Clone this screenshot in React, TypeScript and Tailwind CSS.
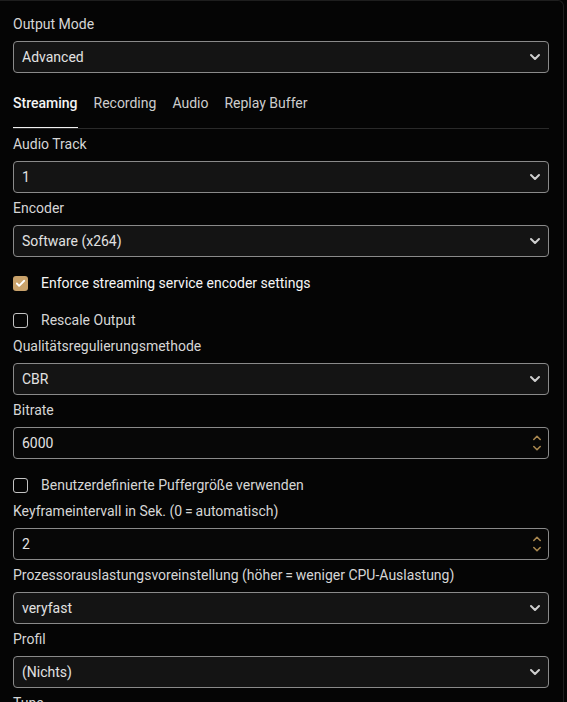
import { ChevronDown, Check } from "lucide-react";

const FONT = "font-['Roboto','Liberation_Sans',sans-serif]";

function Label({ children, className = "" }: { children: React.ReactNode; className?: string }) {
  return <div className={`h-[20px] text-[14px] leading-[20px] text-[#d6d6d6] ${className}`}>{children}</div>;
}

function Select({ value }: { value: string }) {
  return (
    <div className="mt-[7px] flex h-[32px] items-center justify-between rounded-[4px] border border-[#8a8a8a] bg-[#141414] pl-[8px] pr-[5px]">
      <span className="text-[14px] text-[#e2e2e2]">{value}</span>
      <ChevronDown size={16} strokeWidth={3} className="text-[#cfcfcf]" />
    </div>
  );
}

function SpinBox({ value }: { value: string }) {
  return (
    <div className="mt-[7px] flex h-[32px] items-center justify-between rounded-[4px] border border-[#8a8a8a] bg-[#070707] pl-[8px] pr-[6px]">
      <span className="text-[14px] text-[#e2e2e2]">{value}</span>
      <svg width="10" height="20" viewBox="0 0 10 20" fill="none" stroke="#a8874f" strokeWidth="1.6" strokeLinecap="round" strokeLinejoin="round">
        <path d="M1.8 6.5 L5 3.3 L8.2 6.5" />
        <path d="M1.8 13.5 L5 16.7 L8.2 13.5" />
      </svg>
    </div>
  );
}

function CheckRow({ label, checked, className = "" }: { label: string; checked?: boolean; className?: string }) {
  return (
    <div className={`flex h-[20px] items-center gap-[13px] ${className}`}>
      {checked ? (
        <div className="flex h-[15px] w-[15px] items-center justify-center rounded-[3px] bg-[#c9a26b]">
          <Check size={11} strokeWidth={4} className="text-white" />
        </div>
      ) : (
        <div className="h-[15px] w-[15px] rounded-[3px] border border-[#c4c4c4]" />
      )}
      <span className={`text-[14px] leading-[20px] ${checked ? "text-[#f6f6f6]" : "text-[#d6d6d6]"}`}>{label}</span>
    </div>
  );
}

const tabs = ["Streaming", "Recording", "Audio", "Replay Buffer"];

export default function App() {
  return (
    <div className={`h-[702px] w-[567px] overflow-hidden bg-[#050505] ${FONT}`}>
      <div className="h-full w-[564px] rounded-tr-[6px] border-t border-r border-[#1e1e1e] bg-[#050505] pl-[13px] pr-[14px] pt-[13px]">
        <Label>Output Mode</Label>
        <Select value="Advanced" />

        <div className="mt-[19px] flex h-[37px] gap-[16px] border-b border-[#2a2a2a]">
          {tabs.map((t, i) => (
            <div
              key={t}
              className={`h-full pt-[1px] text-[14px] leading-[20px] ${
                i === 0 ? "border-b border-[#f0f0f0] font-medium text-[#f4f4f4]" : "text-[#cdcdcd]"
              }`}
            >
              {t}
            </div>
          ))}
        </div>

        <Label className="mt-[5px]">Audio Track</Label>
        <Select value="1" />
        <Label className="mt-[5px]">Encoder</Label>
        <Select value="Software (x264)" />

        <CheckRow className="mt-[16px]" checked label="Enforce streaming service encoder settings" />
        <CheckRow className="mt-[17px]" label="Rescale Output" />

        <Label className="mt-[6px]">Qualitätsregulierungsmethode</Label>
        <Select value="CBR" />
        <Label className="mt-[5px]">Bitrate</Label>
        <SpinBox value="6000" />

        <CheckRow className="mt-[16px]" label="Benutzerdefinierte Puffergröße verwenden" />

        <Label className="mt-[6px]">Keyframeintervall in Sek. (0{"\u2009=\u2009"}automatisch)</Label>
        <SpinBox value="2" />
        <Label className="mt-[5px]">Prozessorauslastungsvoreinstellung (höher{"\u2009=\u2009"}weniger CPU-Auslastung)</Label>
        <Select value="veryfast" />
        <Label className="mt-[5px]">Profil</Label>
        <Select value="(Nichts)" />
        <Label className="mt-[5px]">Tune</Label>
      </div>
    </div>
  );
}
